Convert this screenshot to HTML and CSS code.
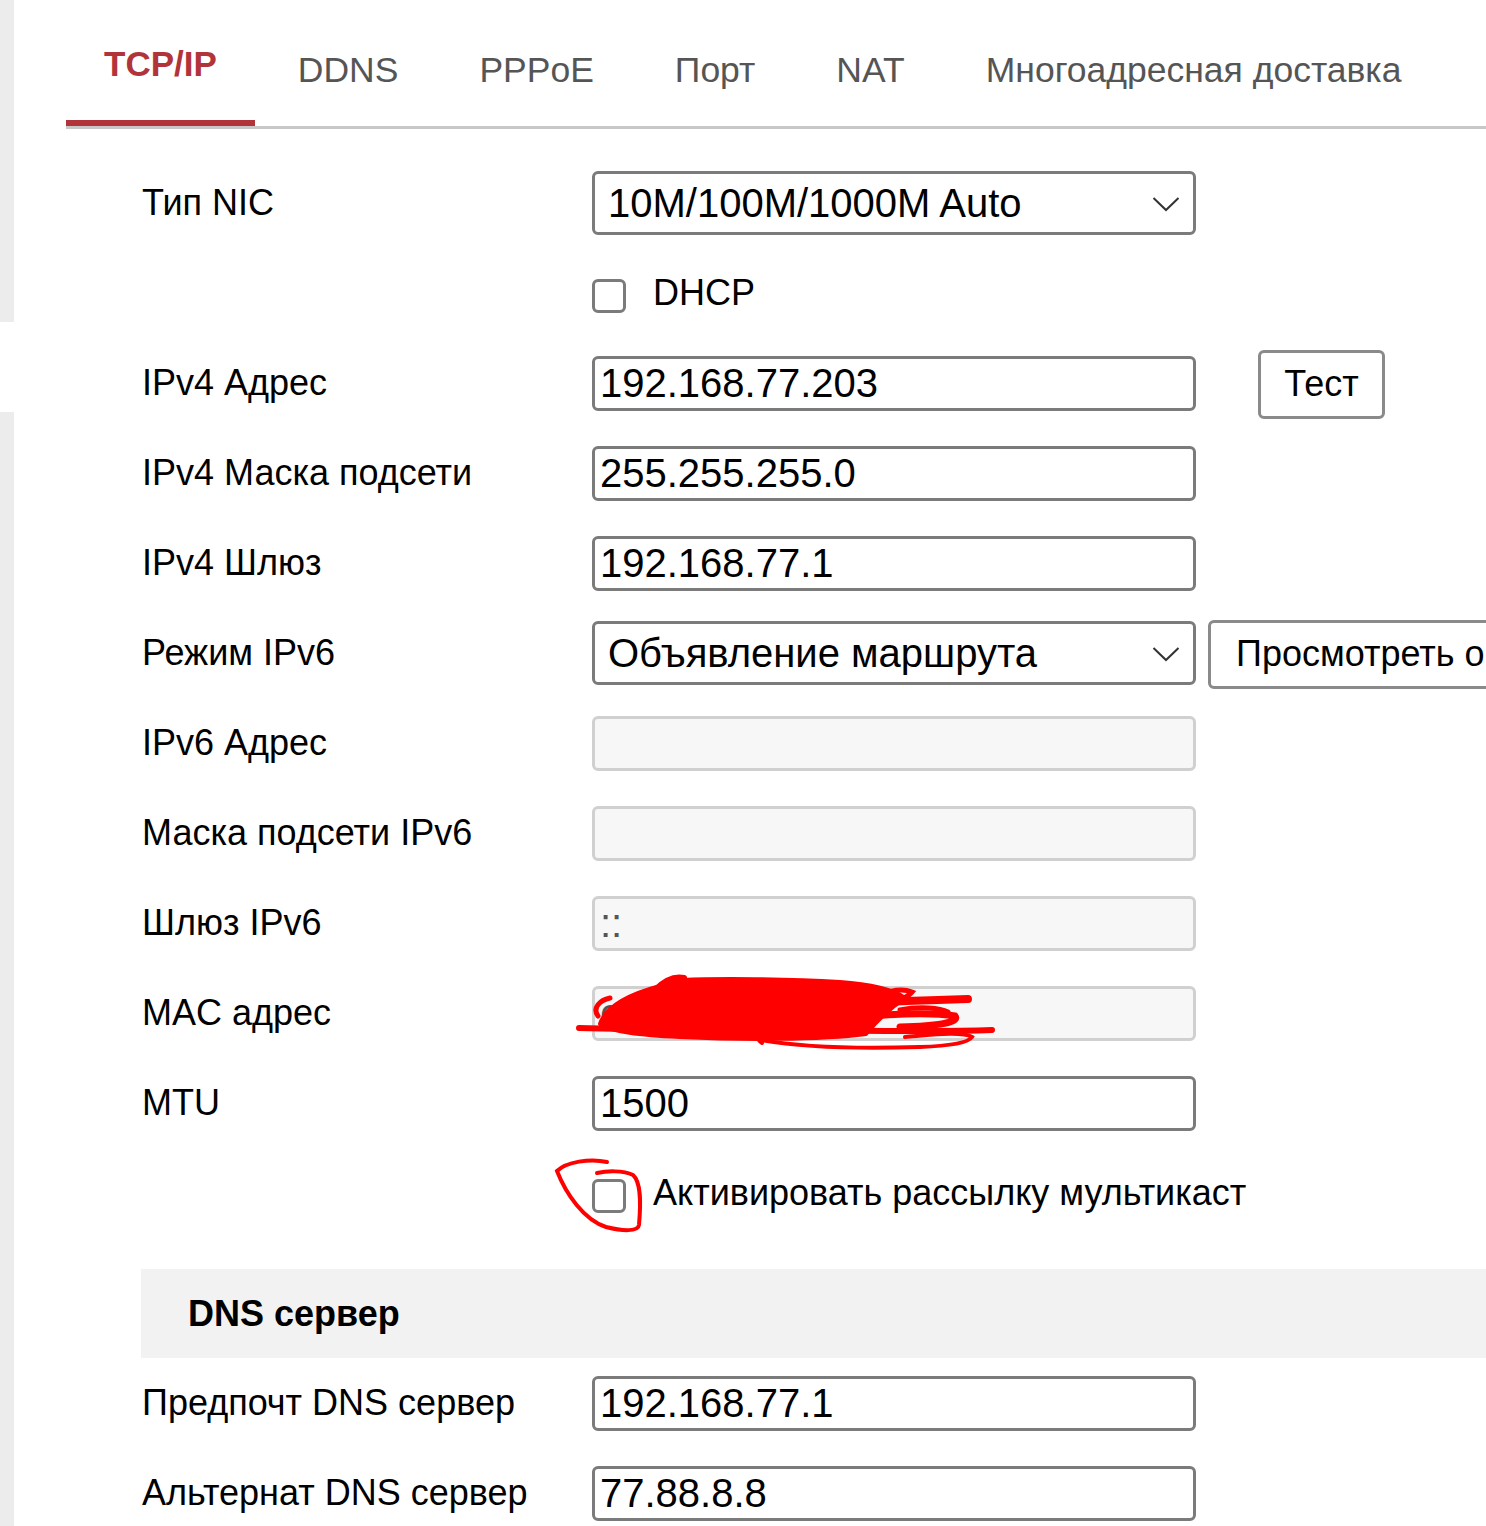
FILE: index.html
```html
<!DOCTYPE html>
<html lang="ru">
<head>
<meta charset="utf-8">
<title>TCP/IP</title>
<link rel="stylesheet" href="styles.css">
</head>
<body>
<div class="page">
  <div class="sidebar">
    <div class="side-top"></div>
    <div class="side-gap"></div>
    <div class="side-bottom"></div>
  </div>
  <div class="main">
    <nav class="tabs">
      <div class="tab active">TCP/IP</div>
      <div class="tab">DDNS</div>
      <div class="tab">PPPoE</div>
      <div class="tab">Порт</div>
      <div class="tab">NAT</div>
      <div class="tab">Многоадресная доставка</div>
    </nav>

    <div class="form">
      <div class="row">
        <div class="label">Тип NIC</div>
        <div class="select">
          <span>10M/100M/1000M Auto</span>
          <svg class="chev" width="28" height="16" viewBox="0 0 28 16"><path d="M1.5 2 L14 14 L26.5 2" fill="none" stroke="#333" stroke-width="2"/></svg>
        </div>
      </div>
      <div class="row">
        <div class="label"></div>
        <div class="check-wrap"><span class="checkbox"></span><span class="check-text">DHCP</span></div>
      </div>
      <div class="row">
        <div class="label">IPv4 Адрес</div>
        <div class="input">192.168.77.203</div>
        <div class="btn btn-test">Тест</div>
      </div>
      <div class="row">
        <div class="label">IPv4 Маска подсети</div>
        <div class="input">255.255.255.0</div>
      </div>
      <div class="row">
        <div class="label">IPv4 Шлюз</div>
        <div class="input">192.168.77.1</div>
      </div>
      <div class="row">
        <div class="label">Режим IPv6</div>
        <div class="select">
          <span>Объявление маршрута</span>
          <svg class="chev" width="28" height="16" viewBox="0 0 28 16"><path d="M1.5 2 L14 14 L26.5 2" fill="none" stroke="#333" stroke-width="2"/></svg>
        </div>
        <div class="btn btn-view">Просмотреть объявление маршрута</div>
      </div>
      <div class="row">
        <div class="label">IPv6 Адрес</div>
        <div class="input disabled"></div>
      </div>
      <div class="row">
        <div class="label">Маска подсети IPv6</div>
        <div class="input disabled"></div>
      </div>
      <div class="row">
        <div class="label">Шлюз IPv6</div>
        <div class="input disabled dim">::</div>
      </div>
      <div class="row">
        <div class="label">MAC адрес</div>
        <div class="input disabled dim">c</div>
      </div>
      <div class="row">
        <div class="label">MTU</div>
        <div class="input">1500</div>
      </div>
      <div class="row">
        <div class="label"></div>
        <div class="check-wrap"><span class="checkbox"></span><span class="check-text nowrap">Активировать рассылку мультикаст</span></div>
      </div>

      <div class="section">DNS сервер</div>

      <div class="row">
        <div class="label">Предпочт DNS сервер</div>
        <div class="input">192.168.77.1</div>
      </div>
      <div class="row">
        <div class="label">Альтернат DNS сервер</div>
        <div class="input">77.88.8.8</div>
      </div>
    </div>
  </div>

  <svg class="marks" width="1486" height="1526" viewBox="0 0 1486 1526">
    <g fill="#f00" stroke="#f00" stroke-linejoin="round" stroke-linecap="round">
      <path stroke-width="4" d="M600 1024 C606 1006 630 994 660 986 C668 980 676 976 682 980 C720 978 790 979 840 982 C870 984 895 990 905 998 C890 1008 876 1022 866 1034 C820 1040 740 1040 680 1037 C640 1035 612 1032 600 1024 Z"/>
    </g>
    <g fill="none" stroke="#f00" stroke-linecap="round">
      <path stroke-width="6" d="M579 1028 C640 1030 720 1029 800 1030 C880 1031 940 1032 992 1030"/>
      <path stroke-width="8" d="M840 1004 C880 1002 930 1000 968 999"/>
      <path stroke-width="7" d="M850 1018 C890 1014 930 1012 955 1016 C960 1022 940 1026 900 1027"/>
      <path stroke-width="5" d="M872 1002 C880 992 900 987 912 992 C905 1000 890 1004 880 1004"/>
      <path stroke-width="4" d="M760 1040 C800 1047 860 1049 920 1047 C950 1046 968 1043 972 1037 C962 1031 930 1035 905 1037"/>
      <path stroke-width="4" d="M762 1043 C752 1037 766 1030 790 1034"/>
      <path stroke-width="5" d="M598 1016 C592 1008 600 1000 610 998"/>
      <path stroke-width="6" d="M655 990 C665 980 675 976 684 978"/>
      <path stroke-width="5" d="M900 1010 C920 1006 940 1008 948 1012"/>
    </g>
    <path d="M607 1162 C590 1158 566 1162 557 1171 C566 1194 584 1220 606 1227 C622 1231 638 1232 639 1225 C641 1202 641 1182 633 1175 C623 1170 606 1171 597 1173" fill="none" stroke="#f00" stroke-width="4" stroke-linecap="round"/>
  </svg>
</div>
</body>
</html>
```

FILE: styles.css
```css
html, body {
  margin: 0;
  padding: 0;
  background: #fff;
}

body {
  font-family: "Liberation Sans", Arial, sans-serif;
  color: #000;
}

.page {
  position: relative;
  display: flex;
  width: 1486px;
  height: 1526px;
  overflow: hidden;
}

.sidebar {
  width: 14px;
  flex-shrink: 0;
  display: flex;
  flex-direction: column;
}

.side-top {
  height: 322px;
  background: #ececec;
}

.side-gap {
  height: 90px;
  background: #fff;
}

.side-bottom {
  flex: 1;
  background: #ececec;
}

.main {
  flex: 1;
  min-width: 0;
}

.tabs {
  display: flex;
  align-items: flex-end;
  gap: 5px;
  margin-left: 52px;
  padding-top: 44px;
  border-bottom: 3px solid #c8c8c8;
}

.tab {
  padding: 0 38px 36px;
  font-size: 35.5px;
  line-height: 40px;
  color: #555;
  white-space: nowrap;
}

.tab.active {
  color: #b1343a;
  font-weight: bold;
  border-bottom: 6px solid #b1343a;
  font-size: 35px;
}

.form {
  margin-top: 29px;
}

.row {
  display: flex;
  align-items: center;
  height: 90px;
  padding-left: 128px;
}

.label {
  width: 450px;
  flex-shrink: 0;
  font-size: 36px;
  white-space: nowrap;
}

.input,
.select {
  width: 604px;
  flex-shrink: 0;
  box-sizing: border-box;
  border: 3px solid #7b7b7b;
  border-radius: 6px;
  background: #fff;
  font-size: 40px;
  white-space: nowrap;
  overflow: hidden;
}

.input {
  height: 55px;
  line-height: 49px;
  padding-left: 5px;
}

.input.disabled {
  background: #f7f7f7;
  border-color: #d0d0d0;
}

.input.dim {
  color: #555;
}

.select {
  height: 64px;
  display: flex;
  align-items: center;
  justify-content: space-between;
  padding: 0 13px 0 13px;
}

.chev {
  display: block;
  margin-top: 2px;
}

.check-wrap {
  display: flex;
  align-items: center;
  gap: 27px;
}

.checkbox {
  display: block;
  width: 34px;
  height: 34px;
  box-sizing: border-box;
  border: 3px solid #7b7b7b;
  border-radius: 6px;
  background: #fff;
  margin-top: 6px;
}

.check-text {
  font-size: 36px;
  white-space: nowrap;
}

.btn {
  box-sizing: border-box;
  height: 69px;
  border: 3px solid #8a8a8a;
  border-radius: 6px;
  background: #fff;
  font-size: 36px;
  display: flex;
  align-items: center;
  justify-content: center;
  white-space: nowrap;
  flex-shrink: 0;
}

.btn-test {
  width: 127px;
  margin-left: 62px;
  margin-top: 2px;
}

.btn-view {
  margin-left: 12px;
  padding: 0 25px;
  justify-content: flex-start;
  margin-top: 2px;
}

.section {
  margin-top: 31px;
  margin-left: 127px;
  height: 89px;
  background: #f2f2f2;
  font-size: 36px;
  font-weight: bold;
  line-height: 89px;
  padding-left: 47px;
}

.marks {
  position: absolute;
  left: 0;
  top: 0;
  pointer-events: none;
}
```
